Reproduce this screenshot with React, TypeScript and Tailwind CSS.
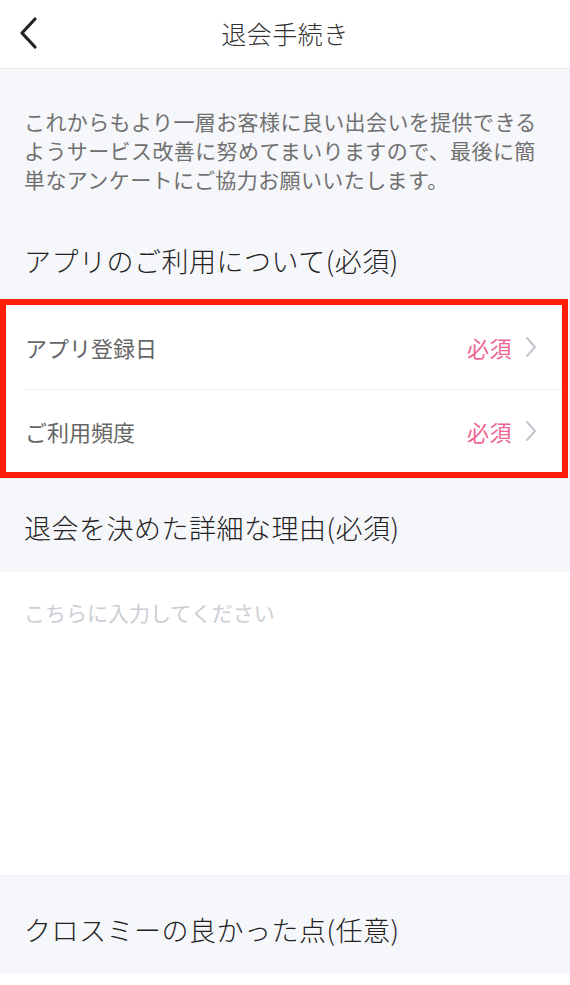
import React from "react";

const font = { fontFamily: '"Noto Sans CJK JP", "Noto Sans", sans-serif' };

function Chevron() {
  return (
    <svg width="14" height="24" viewBox="0 0 14 24" className="ml-[12px]">
      <path d="M3 3 L11 12 L3 21" fill="none" stroke="#c3c6cc" strokeWidth="2" strokeLinecap="round" strokeLinejoin="round" />
    </svg>
  );
}

function Row({ label }: { label: string }) {
  return (
    <div className="flex items-center justify-between pl-[19px] pr-[24px] h-full">
      <span className="text-[22px] text-[#666666]">{label}</span>
      <div className="flex items-center">
        <span className="text-[22px] text-[#ee6794] tracking-[0.5px]">必須</span>
        <Chevron />
      </div>
    </div>
  );
}

export default function App() {
  return (
    <div className="w-[570px] h-[985px] bg-white overflow-hidden flex flex-col" style={font}>
      {/* Header */}
      <div className="h-[69px] shrink-0 flex items-center justify-center relative border-b border-[#e8e9ec] bg-white">
        <svg width="24" height="34" viewBox="0 0 24 34" className="absolute left-[16px] top-[16px]">
          <path d="M19 3 L6 17 L19 31" fill="none" stroke="#222222" strokeWidth="3.2" strokeLinecap="round" strokeLinejoin="round" />
        </svg>
        <span className="text-[25px] font-light text-[#333333] tracking-[0.5px]">退会手続き</span>
      </div>

      {/* Intro */}
      <div className="bg-[#f6f7fa] pt-[38px] pb-[29px] px-[24px] shrink-0">
        <p className="text-[21px] leading-[29px] text-[#707070] tracking-[0.4px]">
          これからもより一層お客様に良い出会いを提供できるようサービス改善に努めてまいりますので、最後に簡単なアンケートにご協力お願いいたします。
        </p>
      </div>

      {/* Heading 1 */}
      <div className="bg-[#f6f7fa] h-[76px] shrink-0 flex items-center px-[24px]">
        <span className="text-[27px] font-light text-[#222222] tracking-[0.5px]">アプリのご利用について(必須)</span>
      </div>

      {/* List */}
      <div className="bg-[#f6f7fa] shrink-0 pr-[2px]">
        <div className="bg-white border-[6px] border-[#ff1e0a] flex flex-col">
          <div className="h-[84px]">
            <Row label="アプリ登録日" />
          </div>
          <div className="ml-[18px] h-px bg-[#eeeff2]" />
          <div className="h-[82px]">
            <Row label="ご利用頻度" />
          </div>
        </div>
      </div>

      {/* Heading 2 */}
      <div className="bg-[#f6f7fa] h-[94px] shrink-0 flex items-center px-[24px] pt-[6px]">
        <span className="text-[27px] font-light text-[#222222] tracking-[0.5px]">退会を決めた詳細な理由(必須)</span>
      </div>

      {/* Textarea */}
      <div className="bg-white h-[304px] shrink-0 border-b border-[#eceef2] px-[24px] pt-[26px]">
        <span className="text-[21px] leading-[28px] text-[#cbced4]">こちらに入力してください</span>
      </div>

      {/* Heading 3 */}
      <div className="bg-[#f6f7fa] h-[97px] shrink-0 flex items-center px-[24px] pt-[11px]">
        <span className="text-[27px] font-light text-[#222222] tracking-[0.5px]">クロスミーの良かった点(任意)</span>
      </div>

      <div className="bg-white flex-1" />
    </div>
  );
}
